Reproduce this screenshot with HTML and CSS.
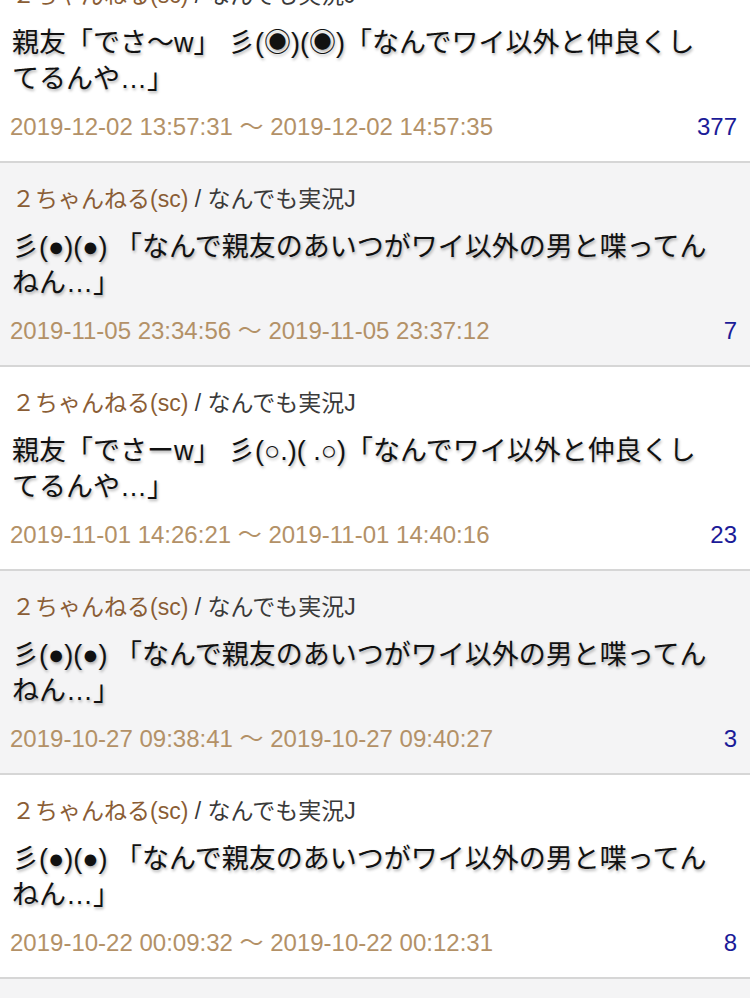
FILE: index.html
```html
<!DOCTYPE html>
<html lang="ja">
<head>
<meta charset="utf-8">
<title>スレッド一覧</title>
<link rel="stylesheet" href="styles.css">
</head>
<body>
<ul class="list">
  <li class="item">
    <div class="src"><span class="site">２ちゃんねる(sc)</span> <span class="board">/ なんでも実況J</span></div>
    <div class="title">親友「でさ〜w」 彡(◉)(◉)「なんでワイ以外と仲良くしてるんや…」</div>
    <div class="meta"><span class="date">2019-12-02 13:57:31 〜 2019-12-02 14:57:35</span><span class="count">377</span></div>
  </li>
  <li class="item">
    <div class="src"><span class="site">２ちゃんねる(sc)</span> <span class="board">/ なんでも実況J</span></div>
    <div class="title">彡(●)(●) 「なんで親友のあいつがワイ以外の男と喋ってんねん…」</div>
    <div class="meta"><span class="date">2019-11-05 23:34:56 〜 2019-11-05 23:37:12</span><span class="count">7</span></div>
  </li>
  <li class="item">
    <div class="src"><span class="site">２ちゃんねる(sc)</span> <span class="board">/ なんでも実況J</span></div>
    <div class="title">親友「でさーw」 彡(○.)( .○)「なんでワイ以外と仲良くしてるんや…」</div>
    <div class="meta"><span class="date">2019-11-01 14:26:21 〜 2019-11-01 14:40:16</span><span class="count">23</span></div>
  </li>
  <li class="item">
    <div class="src"><span class="site">２ちゃんねる(sc)</span> <span class="board">/ なんでも実況J</span></div>
    <div class="title">彡(●)(●) 「なんで親友のあいつがワイ以外の男と喋ってんねん…」</div>
    <div class="meta"><span class="date">2019-10-27 09:38:41 〜 2019-10-27 09:40:27</span><span class="count">3</span></div>
  </li>
  <li class="item">
    <div class="src"><span class="site">２ちゃんねる(sc)</span> <span class="board">/ なんでも実況J</span></div>
    <div class="title">彡(●)(●) 「なんで親友のあいつがワイ以外の男と喋ってんねん…」</div>
    <div class="meta"><span class="date">2019-10-22 00:09:32 〜 2019-10-22 00:12:31</span><span class="count">8</span></div>
  </li>
  <li class="item">
    <div class="src"><span class="site">２ちゃんねる(sc)</span> <span class="board">/ なんでも実況J</span></div>
    <div class="title">彡(●)(●) 「なんで親友のあいつがワイ以外の男と喋ってんねん…」</div>
    <div class="meta"><span class="date">2019-10-20 12:00:00 〜 2019-10-20 12:10:00</span><span class="count">5</span></div>
  </li>
</ul>
</body>
</html>
```

FILE: styles.css
```css
html, body {
  margin: 0;
  padding: 0;
  background: #ffffff;
  overflow: hidden;
}
body {
  font-family: "Liberation Sans", "Noto Sans CJK JP", sans-serif;
  color: #111111;
}
.list {
  list-style: none;
  margin: -41px 0 0 0;
  padding: 0;
}
.item {
  padding: 20px 13px 19px 12px;
  border-bottom: 2px solid #d6d6d6;
  background: #ffffff;
}
.item:nth-child(even) {
  background: #f4f4f5;
}
.src {
  font-size: 23px;
  line-height: 32px;
  white-space: nowrap;
}
.site {
  color: #8a5d35;
}
.board {
  color: #3a3a3a;
}
.title {
  margin-top: 14px;
  margin-right: 23px;
  font-size: 27px;
  line-height: 36px;
  height: 72px;
  overflow: hidden;
  color: #111111;
  text-spacing-trim: space-all;
  text-shadow: 1px 2px 3px rgba(0, 0, 0, 0.3);
}
.meta {
  margin: 15px 0 0 -2px;
  display: flex;
  justify-content: space-between;
  align-items: center;
  line-height: 30px;
  height: 30px;
}
.date {
  font-size: 24px;
  color: #b39167;
  white-space: nowrap;
}
.count {
  font-size: 24px;
  color: #1b1b98;
}
```
